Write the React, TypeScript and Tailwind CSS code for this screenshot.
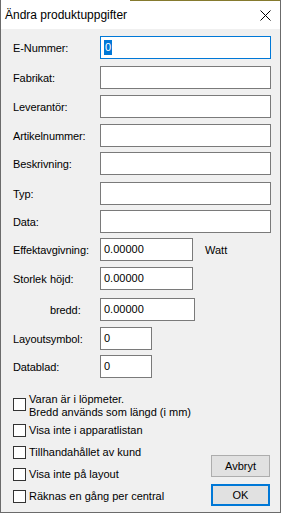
import React from 'react';

interface FieldRow {
  label: React.ReactNode;
  value?: string;
  inputClass: string;
  rowClass: string;
  after?: string;
  focused?: boolean;
}

// Fältrader i dialogen, uppifrån och ned
const rows: FieldRow[] = [
  { label: 'E-Nummer:', value: '0', inputClass: 'w-[171px]', rowClass: 'mt-[7px]', focused: true },
  { label: 'Fabrikat:', inputClass: 'w-[171px]', rowClass: 'mt-[7px]' },
  { label: 'Leverantör:', inputClass: 'w-[171px]', rowClass: 'mt-[6px]' },
  { label: 'Artikelnummer:', inputClass: 'w-[171px]', rowClass: 'mt-[6px]' },
  { label: 'Beskrivning:', inputClass: 'w-[171px]', rowClass: 'mt-[5px]' },
  { label: 'Typ:', inputClass: 'w-[171px]', rowClass: 'mt-[7px]' },
  { label: 'Data:', inputClass: 'w-[171px]', rowClass: 'mt-[5px]' },
  { label: 'Effektavgivning:', value: '0.00000', inputClass: 'w-[93px]', rowClass: 'mt-[5px]', after: 'Watt' },
  {
    label: (
      <span className="flex">
        <span className="w-[37px]">Storlek</span>
        <span>höjd:</span>
      </span>
    ),
    value: '0.00000',
    inputClass: 'w-[93px]',
    rowClass: 'mt-[6px]',
  },
  { label: <span className="pl-[37px]">bredd:</span>, value: '0.00000', inputClass: 'w-[95px]', rowClass: 'mt-[8px]' },
  { label: 'Layoutsymbol:', value: '0', inputClass: 'w-[52px]', rowClass: 'mt-[6px]' },
  { label: 'Datablad:', value: '0', inputClass: 'w-[52px]', rowClass: 'mt-[5px]' },
];

const checks = ['Visa inte i apparatlistan', 'Tillhandahållet av kund', 'Visa inte på layout', 'Räknas en gång per central'];

function Box() {
  return <span className="block w-[13px] h-[13px] border border-[#333333] bg-white shrink-0" />;
}

export default function App() {
  return (
    <div className="w-[281px] h-[513px] flex flex-col bg-[#f0f0f0] border-x border-b border-[#6b6b6b] font-['Liberation_Sans',Arial,sans-serif] text-black overflow-hidden">
      {/* övre kant */}
      <div className="flex h-[1px]">
        <div className="w-[129px] bg-white" />
        <div className="flex-1 bg-[#857a2e]" />
      </div>

      {/* titelrad */}
      <div className="h-[28px] bg-white flex items-center justify-between pl-[4px] pr-[9px]">
        <span className="text-[12px] leading-none">Ändra produktuppgifter</span>
        <svg width="11" height="11" viewBox="0 0 11 11">
          <path d="M0.5 0.5L10.5 10.5M10.5 0.5L0.5 10.5" stroke="#000" strokeWidth="1" fill="none" />
        </svg>
      </div>

      {/* fält */}
      <div className="flex flex-col pl-[12px] text-[11px]">
        {rows.map((r, i) => (
          <div key={i} className={`flex items-center h-[23px] ${r.rowClass}`}>
            <div className="w-[87px] pt-[2px] tracking-[-0.1px]">{r.label}</div>
            <div
              className={`h-[23px] bg-white border flex items-center pl-[3px] ${r.inputClass} ${
                r.focused ? 'border-[#0078d7]' : 'border-[#7a7a7a]'
              }`}
            >
              {r.focused ? (
                <span className="bg-[#0078d7] text-white px-[1px] leading-[15px]">{r.value}</span>
              ) : (
                <span className="leading-none">{r.value}</span>
              )}
            </div>
            {r.after && <span className="ml-[12px] pt-[2px]">{r.after}</span>}
          </div>
        ))}
      </div>

      {/* kryssrutor och knappar */}
      <div className="flex items-end text-[11px] pl-[12px] pr-[10px] mt-[15px]">
        <div className="flex flex-col">
          <div className="flex items-start gap-[3px]">
            <span className="mt-[5px]">
              <Box />
            </span>
            <span className="leading-[13px]">
              Varan är i löpmeter.
              <br />
              Bredd används som längd (i mm)
            </span>
          </div>
          {checks.map((c) => (
            <div key={c} className="flex items-center gap-[3px] h-[22px]">
              <Box />
              <span className="pt-[1px]">{c}</span>
            </div>
          ))}
        </div>
        <div className="ml-auto flex flex-col gap-[7px] mb-[1px]">
          <button className="w-[59px] h-[22px] bg-[#e1e1e1] border border-[#adadad] text-[11px]">Avbryt</button>
          <button className="w-[59px] h-[22px] bg-[#e1e1e1] border-2 border-[#0078d7] text-[11px]">OK</button>
        </div>
      </div>
    </div>
  );
}
